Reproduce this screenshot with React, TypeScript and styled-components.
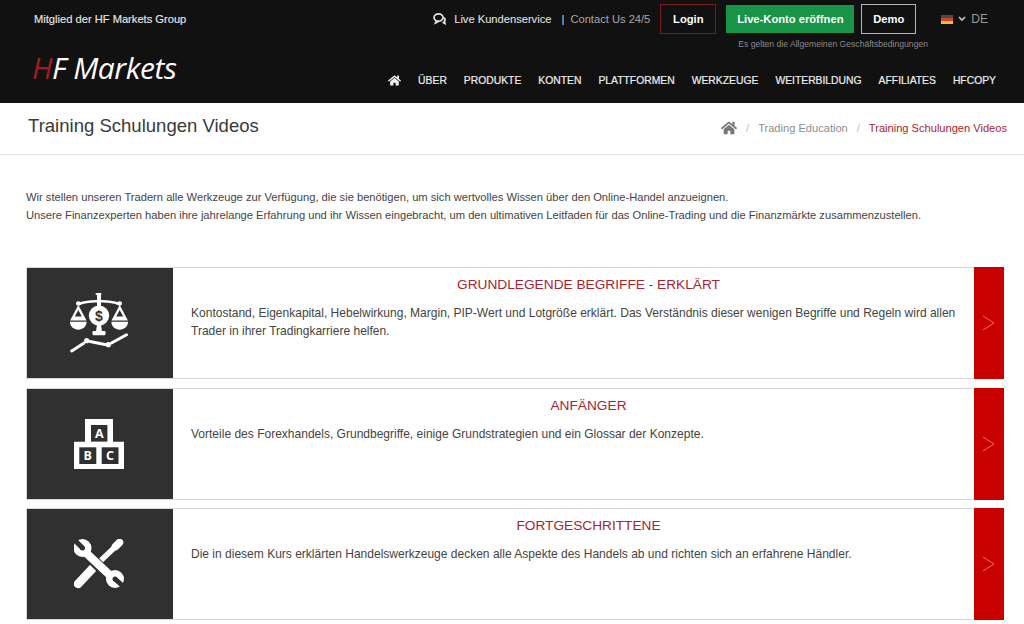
import React from 'react'
import styled, { createGlobalStyle } from 'styled-components'
import { FaHome } from 'react-icons/fa'

const GlobalStyle = createGlobalStyle`
  html, body {
    margin: 0;
    padding: 0;
    background: #fff;
    font-family: "Liberation Sans", Arial, sans-serif;
    overflow: hidden;
  }
`

const Header = styled.header`
  height: 103px;
  background: #111;
  color: #fff;
  display: flex;
  flex-direction: column;
  box-sizing: border-box;
`

const TopRow = styled.div`
  height: 38px;
  padding: 0 36px 0 34px;
  display: flex;
  align-items: center;
`

const Member = styled.div`
  font-size: 11.15px;
  color: #e6e6e6;
  flex: 1;
  -webkit-text-stroke: 0.15px #e6e6e6;
`

const Service = styled.div`
  display: flex;
  align-items: center;
  font-size: 11.15px;
  color: #ddd;
  margin-right: 10px;
`

const ServiceLabel = styled.span`
  margin-left: 8px;
  -webkit-text-stroke: 0.15px #ddd;
`

const Contact = styled.span`
  color: #a8a8a8;
  margin-left: 13px;
  padding-left: 6px;
  position: relative;
  &::before {
    content: '|';
    position: absolute;
    left: -3px;
    color: #ddd;
  }
`

const TopButton = styled.div<{ $variant: 'login' | 'live' | 'demo' }>`
  height: ${(p) => (p.$variant === 'live' ? '28px' : '30px')};
  box-sizing: border-box;
  display: flex;
  align-items: center;
  justify-content: center;
  font-size: 11.2px;
  font-weight: bold;
  color: #fff;
  width: ${(p) => (p.$variant === 'live' ? '128px' : p.$variant === 'login' ? '56px' : '55px')};
  margin-right: ${(p) => (p.$variant === 'login' ? '10px' : p.$variant === 'live' ? '7px' : '25px')};
  background: ${(p) => (p.$variant === 'live' ? '#179447' : 'transparent')};
  border: ${(p) =>
    p.$variant === 'login' ? '1px solid #7d1a1f' : p.$variant === 'demo' ? '1px solid #b5b5b5' : 'none'};
`

const Lang = styled.div`
  display: flex;
  align-items: center;
  font-size: 12px;
  color: #999;
  gap: 5px;
`

const Flag = styled.span`
  width: 12px;
  height: 9px;
  background: linear-gradient(#4a4a4a 0 33%, #d8402a 33% 66%, #f0c030 66%);
`

const Terms = styled.div`
  font-size: 8.6px;
  color: #8a8a8a;
  text-align: right;
  padding-right: 96px;
  height: 13px;
  line-height: 13px;
`

const NavRow = styled.div`
  display: flex;
  align-items: center;
  padding: 0 28px 0 32px;
  margin-top: 7px;
  height: 44px;
`

const Logo = styled.div`
  font-family: "Open Sans", sans-serif;
  font-style: italic;
  font-size: 30px;
  line-height: 34px;
  color: #fff;
  letter-spacing: -0.45px;
  flex: 1;
  margin-bottom: 24px;
  span {
    color: #a01c28;
  }
`

const Nav = styled.nav`
  display: flex;
  align-items: center;
  gap: 17px;
  font-size: 10.35px;
  color: #eee;
  -webkit-text-stroke: 0.2px #eee;
`

const TitleBar = styled.div`
  height: 52px;
  box-sizing: border-box;
  border-bottom: 1px solid #e6e6e6;
  display: flex;
  align-items: center;
  justify-content: space-between;
  padding: 0 17px 5px 28px;
`

const Title = styled.h1`
  margin: 0;
  font-size: 18.55px;
  font-weight: 400;
  color: #3a3a3a;
`

const Breadcrumb = styled.div`
  display: flex;
  align-items: center;
  font-size: 11.1px;
  color: #8e8e8e;
  padding-top: 3px;
`

const Sep = styled.span`
  color: #bbb;
  margin: 0 9px;
  font-size: 11px;
`

const Current = styled.span`
  color: #a8242e;
`

const Intro = styled.p`
  margin: 33px 0 0;
  padding: 0 26px;
  font-size: 11.16px;
  line-height: 18px;
  color: #444;
`

const Cards = styled.div`
  margin-top: 43px;
  padding: 0 20px 0 26px;
  display: flex;
  flex-direction: column;
  gap: 8.5px;
`

const Card = styled.article`
  height: 112px;
  box-sizing: border-box;
  border: 1px solid #d8d8d8;
  display: flex;
`

const IconBox = styled.div`
  width: 146px;
  box-sizing: border-box;
  padding-right: 2px;
  background: #303030;
  display: flex;
  align-items: center;
  justify-content: center;
  flex: none;
`

const Body = styled.div`
  flex: 1;
  padding: 8px 18px 0 18px;
`

const CardTitle = styled.h2`
  margin: 0;
  padding-left: 30px;
  text-align: center;
  font-size: 13.7px;
  line-height: 18px;
  font-weight: 400;
  color: #a8242e;
`

const CardText = styled.p`
  margin: 10.4px 0 0;
  font-size: 12.03px;
  line-height: 18px;
  color: #444;
`

const Arrow = styled.div`
  width: 30px;
  flex: none;
  background: #c80000;
  display: flex;
  align-items: center;
  justify-content: center;
  margin: -1px -1px -1px 0;
`

const ChatIcon = () => (
  <svg width="13" height="12" viewBox="0 0 13 12" fill="none" stroke="#e4e4e4" strokeWidth="1.7">
    <ellipse cx="5.5" cy="4.5" rx="4.5" ry="3.6" />
    <path d="M3.5 8l-1 2 3-1.4M10.4 4.5c1.4.7 2 2 1.4 3.2l-.4.8.6 2-2.4-1.2" />
  </svg>
)

const Chevron = () => (
  <svg width="8" height="6" viewBox="0 0 8 6" fill="none" stroke="#c4c4c4" strokeWidth="1.7">
    <path d="M1 1l3 3 3-3" />
  </svg>
)

const ArrowIcon = () => (
  <svg width="14" height="16" viewBox="0 0 14 16" fill="none" stroke="#f0696b" strokeWidth="1">
    <path d="M1 1l11 7-11 7" />
  </svg>
)

const ScaleIcon = () => (
  <svg width="58" height="60" viewBox="0 0 58 60" fill="#fff">
    <rect x="25.500" y="0" width="6" height="2" rx="1" />
    <rect x="27" y="1.500" width="4" height="12" />
    <path d="M8.300 9.800c6-2 12.500-3 19.500-2.800v2.600c-7-.3-13 .6-18.800 2.800zM49.700 9.800c-6-2-12.500-3-19.500-2.800v2.600c7-.3 13 .6 18.800 2.800z" />
    <circle cx="8.300" cy="10.500" r="2.300" />
    <circle cx="49.700" cy="10.500" r="2.300" />
    <circle cx="29" cy="22.600" r="10.200" />
    <path d="M27 32h4l1 6h-6z" />
    <rect x="22.500" y="38" width="13" height="4.200" rx="1" />
    <path d="M8.300 12L16.500 27.500H.100zM8.300 17L4.800 23.500h7z" fillRule="evenodd" />
    <path d="M49.700 12L57.900 27.500H41.500zM49.700 17l-3.500 6.500h7z" fillRule="evenodd" />
    <path d="M0 28.800h16.600c0 4.500-3.600 7.900-8.300 7.900S0 33.300 0 28.800zM41.400 28.800H58c0 4.500-3.600 7.900-8.300 7.900s-8.300-3.400-8.300-7.900z" />
    <text x="29" y="27.600" fontFamily="Liberation Sans, sans-serif" fontWeight="bold" fontSize="14" textAnchor="middle" fill="#303030">$</text>
    <path d="M1.700 58l12-7.800M20 48.500l15 3M41.500 50l15-8.300" stroke="#fff" strokeWidth="3" strokeLinecap="round" fill="none" />
    <circle cx="16.700" cy="47.700" r="2.600" />
    <circle cx="38.300" cy="51.700" r="2.600" />
  </svg>
)

const BlocksIcon = () => (
  <svg width="50" height="50" viewBox="0 0 50 50">
    <path fill="#fff" d="M11 0h28v22.700h11V50H0V22.700h11z" />
    <rect x="17" y="6" width="16.400" height="16.600" fill="#303030" />
    <rect x="5.300" y="28.300" width="17" height="16.700" fill="#303030" />
    <rect x="27.700" y="28.300" width="16.800" height="16.700" fill="#303030" />
    <g fill="#fff" fontFamily="Open Sans, sans-serif" fontWeight="bold" fontSize="12.500" textAnchor="middle">
      <text x="25.200" y="18.800">A</text>
      <text x="13.800" y="41">B</text>
      <text x="36" y="41">C</text>
    </g>
  </svg>
)

const ToolsIcon = () => (
  <svg width="50" height="50" viewBox="0 0 50 50" fill="none">
    <path d="M4 45L19 29" stroke="#fff" strokeWidth="8.500" strokeLinecap="round" />
    <path d="M19 29L40 9" stroke="#fff" strokeWidth="5.500" />
    <path d="M41.500 7.500L45.500 3.500" stroke="#fff" strokeWidth="7.500" strokeLinecap="round" />
    <path d="M11 13l24 24" stroke="#303030" strokeWidth="11" />
    <path d="M9 11l32 30" stroke="#fff" strokeWidth="8" />
    <circle cx="8.500" cy="9" r="9" fill="#fff" />
    <circle cx="41" cy="40" r="9" fill="#fff" />
    <path d="M8.500 9L0 .5M41 40l9 8" stroke="#303030" strokeWidth="5" />
    <circle cx="8.500" cy="9" r="2.500" fill="#303030" />
    <circle cx="41" cy="40" r="2.500" fill="#303030" />
  </svg>
)

const cards = [
  {
    title: 'GRUNDLEGENDE BEGRIFFE - ERKLÄRT',
    text: 'Kontostand, Eigenkapital, Hebelwirkung, Margin, PIP-Wert und Lotgröße erklärt. Das Verständnis dieser wenigen Begriffe und Regeln wird allen Trader in ihrer Tradingkarriere helfen.',
    icon: <ScaleIcon />,
  },
  {
    title: 'ANFÄNGER',
    text: 'Vorteile des Forexhandels, Grundbegriffe, einige Grundstrategien und ein Glossar der Konzepte.',
    icon: <BlocksIcon />,
  },
  {
    title: 'FORTGESCHRITTENE',
    text: 'Die in diesem Kurs erklärten Handelswerkzeuge decken alle Aspekte des Handels ab und richten sich an erfahrene Händler.',
    icon: <ToolsIcon />,
  },
]

const navItems = ['ÜBER', 'PRODUKTE', 'KONTEN', 'PLATTFORMEN', 'WERKZEUGE', 'WEITERBILDUNG', 'AFFILIATES', 'HFCOPY']

export default function App() {
  return (
    <>
      <GlobalStyle />
      <Header>
        <TopRow>
          <Member>Mitglied der HF Markets Group</Member>
          <Service>
            <ChatIcon />
            <ServiceLabel>Live Kundenservice</ServiceLabel>
            <Contact>Contact Us 24/5</Contact>
          </Service>
          <TopButton $variant="login">Login</TopButton>
          <TopButton $variant="live">Live-Konto eröffnen</TopButton>
          <TopButton $variant="demo">Demo</TopButton>
          <Lang>
            <Flag />
            <Chevron />
            DE
          </Lang>
        </TopRow>
        <Terms>Es gelten die Allgemeinen Geschäftsbedingungen</Terms>
        <NavRow>
          <Logo>
            <span>H</span>F Markets
          </Logo>
          <Nav>
            <FaHome size={13} />
            {navItems.map((item) => (
              <span key={item}>{item}</span>
            ))}
          </Nav>
        </NavRow>
      </Header>
      <TitleBar>
        <Title>Training Schulungen Videos</Title>
        <Breadcrumb>
          <FaHome size={16} color="#777" />
          <Sep>/</Sep>
          Trading Education
          <Sep>/</Sep>
          <Current>Training Schulungen Videos</Current>
        </Breadcrumb>
      </TitleBar>
      <Intro>
        Wir stellen unseren Tradern alle Werkzeuge zur Verfügung, die sie benötigen, um sich wertvolles Wissen über den Online-Handel anzueignen.
        <br />
        Unsere Finanzexperten haben ihre jahrelange Erfahrung und ihr Wissen eingebracht, um den ultimativen Leitfaden für das Online-Trading und die Finanzmärkte zusammenzustellen.
      </Intro>
      <Cards>
        {cards.map((card) => (
          <Card key={card.title}>
            <IconBox>{card.icon}</IconBox>
            <Body>
              <CardTitle>{card.title}</CardTitle>
              <CardText>{card.text}</CardText>
            </Body>
            <Arrow>
              <ArrowIcon />
            </Arrow>
          </Card>
        ))}
      </Cards>
    </>
  )
}
